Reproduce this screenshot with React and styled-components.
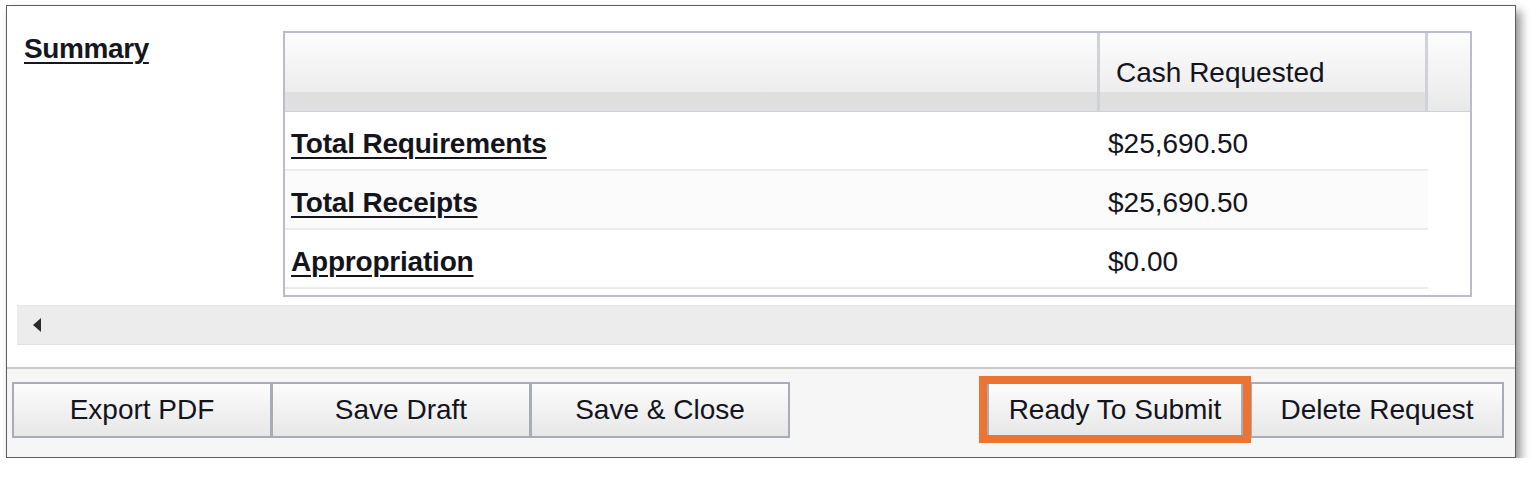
import styled, { createGlobalStyle } from 'styled-components';

const GlobalStyle = createGlobalStyle`
  body {
    margin: 0;
    background: #fff;
    font-family: "Liberation Sans", Arial, sans-serif;
    color: #1e1e1e;
  }
`;

const rows = [
  { label: 'Total Requirements', amount: '$25,690.50' },
  { label: 'Total Receipts', amount: '$25,690.50' },
  { label: 'Appropriation', amount: '$0.00' },
];

export default function App() {
  return (
    <>
      <GlobalStyle />
      <Page>
        <Frame>
          <TopSection>
            <SummaryLabel>Summary</SummaryLabel>
            <Grid>
              <HeaderRow>
                <HeaderCell $wide>&nbsp;</HeaderCell>
                <HeaderCell $amount>Cash Requested</HeaderCell>
                <HeaderCell $filler />
              </HeaderRow>
              {rows.map((r, i) => (
                <Row key={r.label} $alt={i === 1}>
                  <LabelCell>
                    <RowLink>{r.label}</RowLink>
                  </LabelCell>
                  <AmountCell>{r.amount}</AmountCell>
                </Row>
              ))}
              <GridFoot />
            </Grid>
          </TopSection>
          <ScrollBar>
            <ArrowLeft />
          </ScrollBar>
          <ButtonBar>
            <ButtonGroup>
              <Button>Export PDF</Button>
              <Button>Save Draft</Button>
              <Button>Save &amp; Close</Button>
            </ButtonGroup>
            <ButtonGroup>
              <Highlight>
                <Button>Ready To Submit</Button>
              </Highlight>
              <Button $narrow>Delete Request</Button>
            </ButtonGroup>
          </ButtonBar>
        </Frame>
      </Page>
    </>
  );
}

const Page = styled.div`
  padding: 5px 0 0 6px;
`;

const Frame = styled.div`
  width: 1508px;
  background: #fff;
  border: 1px solid #5c5c5c;
  box-shadow: 5px 6px 9px rgba(0, 0, 0, 0.42);
`;

const TopSection = styled.div`
  display: flex;
  padding-top: 25px;
`;

const SummaryLabel = styled.div`
  width: 259px;
  padding: 2px 0 0 17px;
  font-size: 28px;
  line-height: 32px;
  font-weight: bold;
  color: #16161f;
  text-decoration: underline;
  text-decoration-thickness: 2px;
  text-underline-offset: 4px;
  letter-spacing: -0.4px;
`;

const Grid = styled.div`
  width: 1185px;
  border: 2px solid #babdc7;
  background: #fff;
`;

const HeaderRow = styled.div`
  display: flex;
  height: 78px;
  border-bottom: 1px solid #cdd0d6;
`;

const HeaderCell = styled.div`
  display: flex;
  align-items: center;
  box-sizing: border-box;
  font-size: 28px;
  color: #14141c;
  padding-left: ${(p) => (p.$amount ? '16px' : '0')};
  width: ${(p) => (p.$wide ? '815px' : p.$amount ? '328px' : 'auto')};
  flex: ${(p) => (p.$filler ? '1' : 'none')};
  border-right: ${(p) => (p.$filler ? 'none' : '3px solid #cfd2d9')};
  padding-top: 1px;
  background: ${(p) =>
    p.$filler
      ? 'linear-gradient(#fdfdfd, #e9e9e9)'
      : 'linear-gradient(#fdfdfd 0%, #ededed 75%, #dfdfdf 76%, #e0e0e0 100%)'};
`;

const Row = styled.div`
  display: flex;
  align-items: center;
  width: 1143px;
  height: 57px;
  border-bottom: 2px solid #ececec;
  background: ${(p) => (p.$alt ? '#fbfbfb' : '#fff')};
`;

const LabelCell = styled.div`
  width: 815px;
  padding: 6px 0 0 6px;
  box-sizing: border-box;
`;

const RowLink = styled.a`
  font-size: 28px;
  font-weight: bold;
  color: #14141c;
  text-decoration: underline;
  text-decoration-thickness: 2px;
  text-underline-offset: 4px;
  letter-spacing: -0.2px;
`;

const AmountCell = styled.div`
  padding: 6px 0 0 8px;
  font-size: 28px;
  color: #14141c;
`;

const GridFoot = styled.div`
  height: 6px;
`;

const ScrollBar = styled.div`
  display: flex;
  align-items: center;
  height: 38px;
  margin: 8px 0 0 10px;
  padding-left: 16px;
  background: #ececec;
  border-top: 1px solid #e6e6e6;
  border-bottom: 1px solid #e2e2e2;
`;

const ArrowLeft = styled.span`
  width: 0;
  height: 0;
  border-top: 7px solid transparent;
  border-bottom: 7px solid transparent;
  border-right: 8px solid #2a2a2a;
`;

const ButtonBar = styled.div`
  display: flex;
  justify-content: space-between;
  margin-top: 22px;
  padding: 13px 11px 19px 6px;
  background: #f6f6f6;
  border-top: 2px solid #c9c9c9;
`;

const ButtonGroup = styled.div`
  display: flex;
`;

const Button = styled.button`
  width: ${(p) => (p.$narrow ? '254px' : '260px')};
  height: 56px;
  box-sizing: border-box;
  border: 2px solid #a8acb5;
  margin-left: -1px;
  background: linear-gradient(#fcfcfc, #e7e7e7);
  font-family: "Liberation Sans", Arial, sans-serif;
  font-size: 28px;
  color: #14141c;
  padding: 0;
  cursor: pointer;
`;

const Highlight = styled.div`
  position: relative;
  margin-right: 8px;
  button {
    width: 256px;
    margin-left: 0;
  }
  &::after {
    content: '';
    position: absolute;
    top: -6px;
    bottom: -5px;
    left: -8px;
    right: -8px;
    border: 8px solid #ec7433;
    pointer-events: none;
  }
`;
